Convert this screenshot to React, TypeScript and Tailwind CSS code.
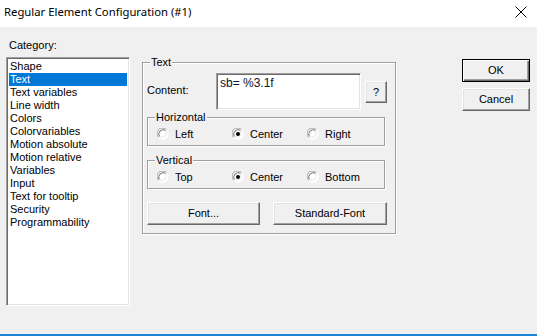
import React from "react";

const F = { fontFamily: '"Liberation Sans", Arial, sans-serif' };

function Radio({ checked }: { checked?: boolean }) {
  return (
    <svg width="12" height="12" viewBox="0 0 12 12" className="shrink-0">
      <circle cx="6" cy="6" r="5.5" fill="#ffffff" />
      <path d="M1.6 9.4 A5.5 5.5 0 0 1 9.4 1.6" stroke="#a0a0a0" strokeWidth="1" fill="none" />
      <path d="M9.4 1.6 A5.5 5.5 0 0 1 1.6 9.4" stroke="#ffffff" strokeWidth="1" fill="none" />
      <path d="M2.4 8.6 A4.5 4.5 0 0 1 8.6 2.4" stroke="#696969" strokeWidth="1" fill="none" />
      <path d="M8.6 2.4 A4.5 4.5 0 0 1 2.4 8.6" stroke="#e3e3e3" strokeWidth="1" fill="none" />
      {checked && <circle cx="6" cy="6" r="2" fill="#000000" />}
    </svg>
  );
}

function Btn({ children, className = "", def = false }: { children: React.ReactNode; className?: string; def?: boolean }) {
  return (
    <div
      className={
        "flex items-center justify-center bg-[#f0f0f0] text-[11px] text-black " +
        (def
          ? "border border-[#000000] shadow-[inset_1px_1px_0_#ffffff,inset_-1px_-1px_0_#696969,inset_-2px_-2px_0_#a0a0a0] "
          : "border border-t-white border-l-white border-r-[#696969] border-b-[#696969] shadow-[inset_-1px_-1px_0_#a0a0a0,inset_1px_1px_0_#e3e3e3] ") +
        className
      }
      style={F}
    >
      {children}
    </div>
  );
}

function Group({ label, className = "", children }: { label: string; className?: string; children?: React.ReactNode }) {
  return (
    <div className={"relative border border-[#a0a0a0] shadow-[1px_1px_0_#ffffff,inset_1px_1px_0_#ffffff] " + className}>
      <span className="absolute left-[7px] top-[-7px] bg-[#f0f0f0] px-[1px] text-[11px] leading-[13px] text-black" style={F}>
        {label}
      </span>
      {children}
    </div>
  );
}

export default function App() {
  const items = [
    "Shape",
    "Text",
    "Text variables",
    "Line width",
    "Colors",
    "Colorvariables",
    "Motion absolute",
    "Motion relative",
    "Variables",
    "Input",
    "Text for tooltip",
    "Security",
    "Programmability",
  ];
  return (
    <div className="w-[537px] h-[336px] bg-[#f0f0f0] flex flex-col overflow-hidden" style={F}>
      <div className="h-[27px] bg-white flex items-start shrink-0">
        <span
          className="ml-[4px] mt-[4px] text-[11.3px] leading-[16px] text-black"
          style={{ fontFamily: '"Noto Sans", "Open Sans", sans-serif' }}
        >
          Regular Element Configuration (#1)
        </span>
        <svg className="ml-auto mr-[10px] mt-[6px]" width="12" height="12" viewBox="0 0 12 12">
          <path d="M0.5 0.5 L11.5 11.5 M11.5 0.5 L0.5 11.5" stroke="#000" strokeWidth="1" />
        </svg>
      </div>
      <div className="flex flex-row flex-1 pt-[12px]">
        <div className="ml-[6px] w-[124px] flex flex-col">
          <div className="pl-[3px] h-[13px] text-[11px] leading-[13px] text-black">Category:</div>
          <div className="mt-[5px] h-[249px] bg-white border border-t-[#a0a0a0] border-l-[#a0a0a0] border-r-white border-b-white shadow-[inset_1px_1px_0_#696969,inset_-1px_-1px_0_#e3e3e3] pt-[2px] pl-[2px] pr-[2px]">
            {items.map((it) => (
              <div
                key={it}
                className={
                  "h-[13px] leading-[13px] text-[11px] pl-[1px] whitespace-nowrap " +
                  (it === "Text" ? "bg-[#0078d7] text-white" : "text-black")
                }
              >
                {it}
              </div>
            ))}
          </div>
        </div>

        <div className="ml-[12px] w-[254px] flex flex-col pt-[23px]">
          <Group label="Text" className="h-[172px] flex flex-col pl-[4px]">
            <div className="flex flex-row mt-[10px]">
              <div className="w-[69px] text-[11px] leading-[13px] pt-[11px] text-black">Content:</div>
              <div className="w-[145px] h-[37px] bg-white border border-t-[#a0a0a0] border-l-[#a0a0a0] border-r-white border-b-white shadow-[inset_1px_1px_0_#696969,inset_-1px_-1px_0_#e3e3e3] pl-[3px] pt-[2px] text-[12px] leading-[15px] text-[#10102a]">
                sb= %3.1f
              </div>
              <Btn className="ml-[4px] mt-[8px] w-[22px] h-[22px]">?</Btn>
            </div>
            <Group label="Horizontal" className="mt-[7px] w-[238px] h-[29px] flex items-start pt-[10px]">
              <div className="flex items-center w-[76px] pl-[9px] gap-[6px] text-[11px] leading-[12px] text-black"><Radio /><span>Left</span></div>
              <div className="flex items-center w-[75px] pl-[8px] gap-[6px] text-[11px] leading-[12px] text-black"><Radio checked /><span>Center</span></div>
              <div className="flex items-center pl-[8px] gap-[6px] text-[11px] leading-[12px] text-black"><Radio /><span>Right</span></div>
            </Group>
            <Group label="Vertical" className="mt-[14px] w-[238px] h-[29px] flex items-start pt-[10px]">
              <div className="flex items-center w-[76px] pl-[9px] gap-[6px] text-[11px] leading-[12px] text-black"><Radio /><span>Top</span></div>
              <div className="flex items-center w-[75px] pl-[8px] gap-[6px] text-[11px] leading-[12px] text-black"><Radio checked /><span>Center</span></div>
              <div className="flex items-center pl-[8px] gap-[6px] text-[11px] leading-[12px] text-black"><Radio /><span>Bottom</span></div>
            </Group>
            <div className="flex flex-row mt-[13px] gap-[13px]">
              <Btn className="w-[113px] h-[23px]">Font...</Btn>
              <Btn className="w-[114px] h-[23px]">Standard-Font</Btn>
            </div>
          </Group>
        </div>

        <div className="ml-[66px] w-[68px] flex flex-col pt-[20px] gap-[6px]">
          <Btn def className="w-[68px] h-[23px]">OK</Btn>
          <Btn className="w-[68px] h-[23px]">Cancel</Btn>
        </div>
      </div>
      <div className="h-[2px] bg-[#1883d7] shrink-0" />
    </div>
  );
}
